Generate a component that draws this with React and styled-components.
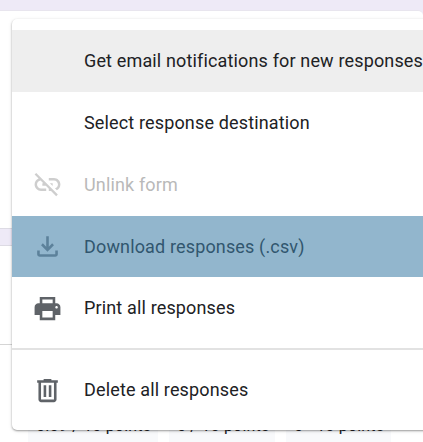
import React from 'react';
import styled, { createGlobalStyle } from 'styled-components';

const GlobalStyle = createGlobalStyle`
  * { box-sizing: border-box; }
  body { margin: 0; background: #eeeaf7; font-family: Roboto, Arial, sans-serif; overflow: hidden; }
`;

const Page = styled.main`
  position: relative;
  display: flex;
  flex-direction: column;
  gap: 16px;
  width: 423px;
  height: 442px;
  padding-top: 10px;
  overflow: hidden;
  background: #eeeaf7;
`;

const Card = styled.section`
  flex: none;
  height: ${({ $height }) => $height}px;
  background: #fff;
  border-top: 1px solid ${({ $edge }) => $edge};
  border-bottom: 1px solid #dddbe4;
  border-top-right-radius: ${({ $rounded }) => ($rounded ? 5 : 0)}px;
`;

const CardHeading = styled.div`
  height: 99px;
  border-bottom: 1px solid #d5d5d5;
`;

const Chips = styled.div`
  display: flex;
  gap: 11px;
  padding: 66px 0 0 28px;
`;

const Chip = styled.span`
  width: ${({ $width }) => $width}px;
  height: 40px;
  padding-left: 8px;
  background: #f8f9fb;
  color: #202124;
  font-size: 16px;
  line-height: 30px;
  letter-spacing: 0.2px;
  white-space: pre;
`;

const Menu = styled.nav`
  position: absolute;
  top: 19px;
  left: 12px;
  width: 430px;
  height: 411px;
  padding-top: 11.45px;
  background: #fff;
  border-radius: 5px;
  box-shadow: 0 1px 2px rgba(0, 0, 0, 0.36), 0 1px 5px rgba(0, 0, 0, 0.08);
`;

const tones = {
  normal: { bg: '#fff', text: '#202124', icon: '#5f6368' },
  hover: { bg: '#eeeeee', text: '#202124', icon: '#5f6368' },
  disabled: { bg: '#fff', text: '#b9b9b9', icon: '#cecece' },
  selected: { bg: '#92b6cd', text: '#31566f', icon: '#5c819a' },
};

const MenuItem = styled.div`
  display: flex;
  align-items: center;
  height: 61.75px;
  padding-left: 20px;
  background: ${({ $tone }) => tones[$tone].bg};
  color: ${({ $tone }) => tones[$tone].text};
`;

const IconSlot = styled.span`
  display: flex;
  flex: none;
  width: 52px;
  color: ${({ $tone }) => tones[$tone].icon};
  svg { width: 31px; height: 31px; fill: currentColor; }
`;

const Label = styled.span`
  font-size: 18px;
  line-height: 24px;
  letter-spacing: 0.15px;
  white-space: nowrap;
`;

const Divider = styled.div`
  height: 2px;
  margin: 9px 0;
  background: #e2e2e2;
`;

const icons = {
  unlink: (
    <svg viewBox="0 0 24 24">
      <path d="M17 7h-4v1.9h4c1.71 0 3.1 1.39 3.1 3.1 0 1.43-.98 2.63-2.31 2.98l1.46 1.46C20.88 15.61 22 13.95 22 12c0-2.76-2.24-5-5-5zm-1 4h-2.19l2 2H16v-2zM2 4.27l3.11 3.11C3.29 8.12 2 9.91 2 12c0 2.76 2.24 5 5 5h4v-1.9H7c-1.71 0-3.1-1.39-3.1-3.1 0-1.59 1.21-2.9 2.76-3.07L8.73 11H8v2h2.73L13 15.27V17h1.73l4.01 4L20 19.74 3.27 3 2 4.27z" />
    </svg>
  ),
  download: (
    <svg viewBox="0 0 24 24">
      <path d="M12 16l-5-5 1.4-1.45 2.6 2.6V4h2v8.15l2.6-2.6L17 11l-5 5zm-6 4q-.825 0-1.412-.587Q4 18.825 4 18v-3h2v3h12v-3h2v3q0 .825-.587 1.413Q18.825 20 18 20H6z" />
    </svg>
  ),
  print: (
    <svg viewBox="0 0 24 24">
      <path fillRule="evenodd" d="M18 3H6v5H5c-1.66 0-3 1.34-3 3v6h4v4h12v-4h4v-6c0-1.66-1.34-3-3-3h-1V3zM8 5h8v3H8V5zm8 14H8v-5h8v5zm3-7c-.55 0-1-.45-1-1s.45-1 1-1 1 .45 1 1-.45 1-1 1z" />
    </svg>
  ),
  trash: (
    <svg viewBox="0 0 24 24">
      <path fillRule="evenodd" d="M15 4V3H9v1H4v2h1v13c0 1.1.9 2 2 2h10c1.1 0 2-.9 2-2V6h1V4h-5zm2 15H7V6h10v13zM9 8h2v9H9V8zm4 0h2v9h-2V8z" />
    </svg>
  ),
};

function Item({ icon, tone = 'normal', children }) {
  return (
    <MenuItem $tone={tone} role="menuitem">
      <IconSlot $tone={tone}>{icon && icons[icon]}</IconSlot>
      <Label>{children}</Label>
    </MenuItem>
  );
}

export default function App() {
  return (
    <>
      <GlobalStyle />
      <Page>
        <Card $height={219} $edge="#e8e5ee" $rounded />
        <Card $height={220} $edge="#dddbe4">
          <CardHeading />
          <Chips>
            <Chip $width={130}>0.09 / 10 points</Chip>
            <Chip $width={106}>0 / 10 points</Chip>
            <Chip $width={105}>0 - 10 points</Chip>
          </Chips>
        </Card>
        <Menu role="menu">
          <Item tone="hover">Get email notifications for new responses</Item>
          <Item>Select response destination</Item>
          <Item icon="unlink" tone="disabled">Unlink form</Item>
          <Item icon="download" tone="selected">Download responses (.csv)</Item>
          <Item icon="print">Print all responses</Item>
          <Divider />
          <Item icon="trash">Delete all responses</Item>
        </Menu>
      </Page>
    </>
  );
}
